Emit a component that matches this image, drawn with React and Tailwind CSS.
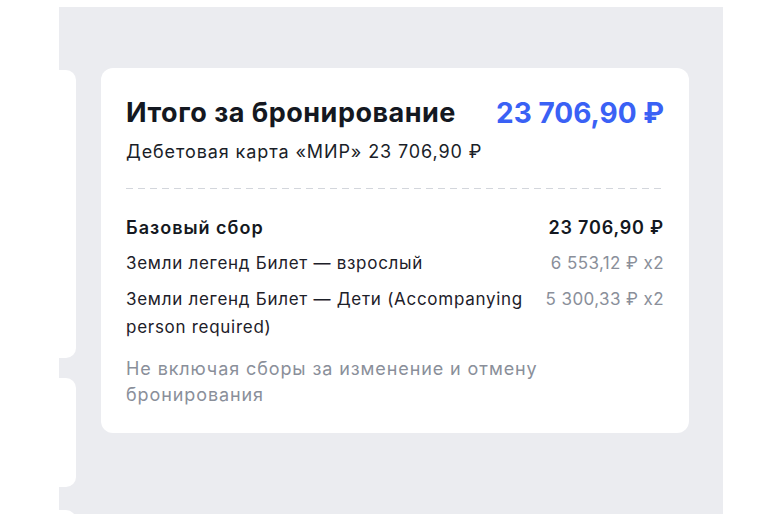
export default function App() {
  const rows = [
    { label: "Земли легенд Билет — взрослый", value: "6 553,12 ₽ x2" },
    {
      label: "Земли легенд Билет — Дети (Accompanying person required)",
      value: "5 300,33 ₽ x2",
    },
  ];

  return (
    <div
      className="w-[783px] h-[519px] bg-white overflow-hidden"
      style={{ fontFamily: "Inter, 'Noto Sans', sans-serif" }}
    >
      <div className="ml-[59px] mt-[7px] w-[664px] h-[507px] bg-[#ebecf0] flex overflow-hidden">
        {/* clipped cards on the left */}
        <div className="w-[17px] flex flex-col shrink-0">
          <div className="shrink-0 mt-[63px] h-[288px] bg-white rounded-r-[10px]"></div>
          <div className="shrink-0 mt-[20px] h-[109px] bg-white rounded-r-[10px]"></div>
          <div className="shrink-0 mt-[23px] h-[40px] bg-white rounded-r-[10px]"></div>
        </div>

        {/* summary card */}
        <div className="ml-[25px] mt-[61px] w-[588px] h-[365px] bg-white rounded-[12px] px-[25px] pt-[28px]">
          <div className="flex items-center justify-between">
            <h2 className="text-[27px] leading-[34px] font-bold text-[#141821] tracking-[0.5px]">
              Итого за бронирование
            </h2>
            <span className="text-[28px] leading-[34px] font-bold text-[#3a61f5]">
              23 706,90 ₽
            </span>
          </div>
          <p className="mt-[10px] text-[18px] leading-[24px] text-[#1a1e28] tracking-[0.9px]">
            Дебетовая карта «МИР» 23 706,90 ₽
          </p>

          <div className="mt-[24px] h-px bg-[repeating-linear-gradient(90deg,#d3d6dc_0,#d3d6dc_7px,transparent_7px,transparent_12px)]"></div>

          <div className="mt-[27px] flex justify-between text-[18px] leading-[24px] font-semibold text-[#141821]">
            <span className="tracking-[1px]">Базовый сбор</span>
            <span className="tracking-[0.8px]">23 706,90 ₽</span>
          </div>

          <div className="mt-[9px] flex flex-col gap-[8px]">
            {rows.map((r) => (
              <div key={r.value} className="flex justify-between gap-4 text-[17px] leading-[28px]">
                <span className="text-[#1d2029] max-w-[410px] tracking-[0.72px]">{r.label}</span>
                <span className="text-[#8a8f9a] whitespace-nowrap tracking-[0.4px]">{r.value}</span>
              </div>
            ))}
          </div>

          <p className="mt-[15px] text-[18px] leading-[26px] text-[#8a8f9a] max-w-[430px] tracking-[0.9px]">
            Не включая сборы за изменение и отмену бронирования
          </p>
        </div>
      </div>
    </div>
  );
}
